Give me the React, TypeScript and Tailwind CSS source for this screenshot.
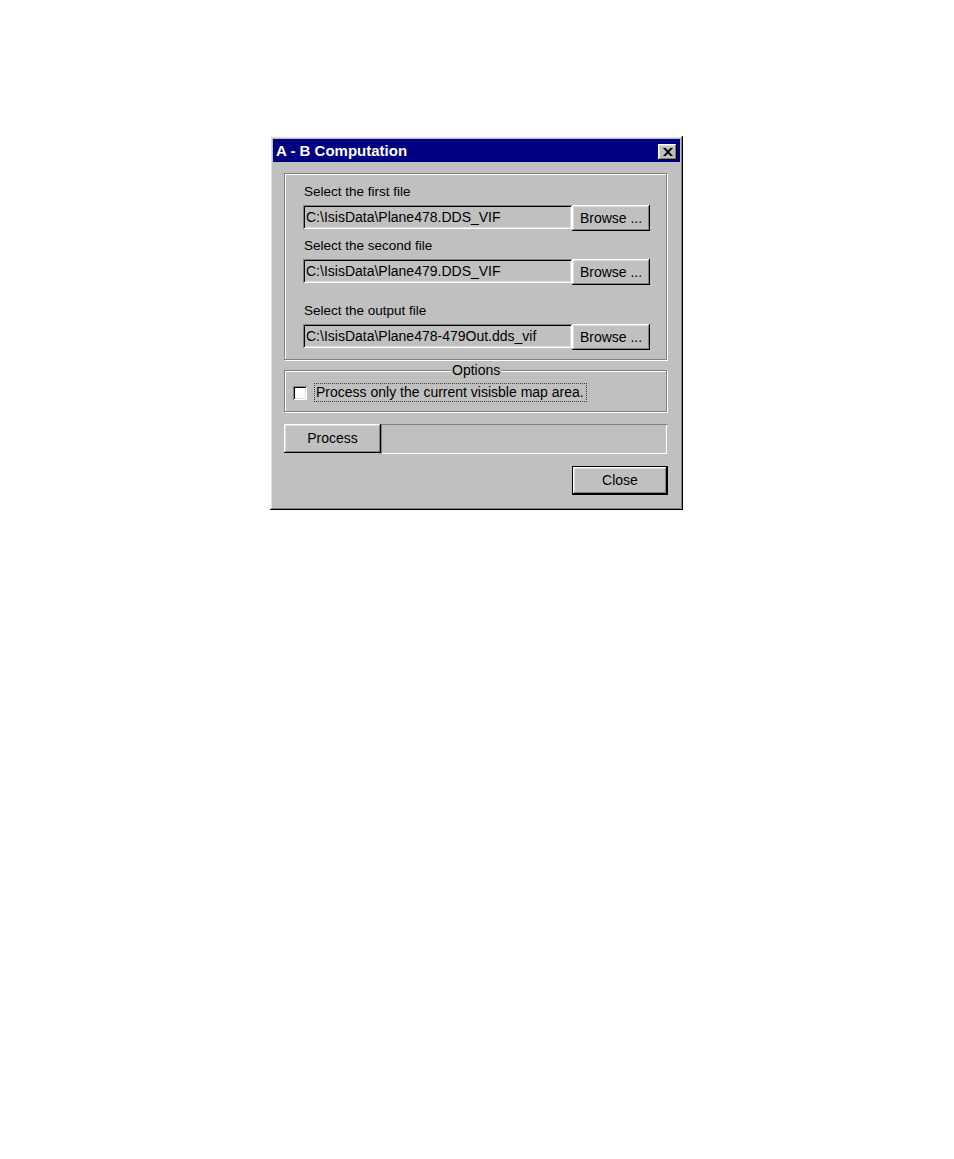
const raised =
  "shadow-[inset_-1px_-1px_#000000,inset_1px_1px_#ffffff,inset_-2px_-2px_#808080,inset_2px_2px_#dfdfdf]";
const sunken =
  "shadow-[inset_1px_1px_#808080,inset_-1px_-1px_#ffffff,inset_2px_2px_#000000,inset_-2px_-2px_#dfdfdf]";
const etched = "border border-[#808080] shadow-[inset_1px_1px_#ffffff,1px_1px_#ffffff]";

const FileRow = ({ label, value, labelTop }: { label: string; value: string; labelTop: string }) => (
  <>
    <div className={`${labelTop} pl-[1px] h-[16px] leading-[16px] text-[13.5px]`}>{label}</div>
    <div className="mt-[5px] flex items-start">
      <div className={`w-[269px] h-[24px] ${sunken} bg-[#c0c0c0] pl-[3px] flex items-center whitespace-nowrap overflow-hidden`}>
        {value}
      </div>
      <button className={`w-[78px] h-[26px] ${raised} bg-[#c0c0c0] flex items-center justify-center`}>
        Browse ...
      </button>
    </div>
  </>
);

export default function App() {
  return (
    <div className="min-h-[1159px] w-full bg-white pt-[136px] pl-[270px] font-['Liberation_Sans',Arial,sans-serif] text-[14px] text-black">
      <div className={`w-[413px] h-[374px] p-[3px] bg-[#c0c0c0] ${raised}`}>
        {/* title bar */}
        <div className="h-[23px] bg-[#000080] flex items-center justify-between pl-[3px] pr-[3px]">
          <span className="text-white font-bold text-[15px] leading-none">A - B Computation</span>
          <button className={`mt-[2px] w-[19px] h-[16px] bg-[#c0c0c0] ${raised} flex items-center justify-center`}>
            <svg width="10" height="8" viewBox="0 0 10 8">
              <path d="M0 0h2.5l2.5 2.6L7.5 0H10L6.3 4 10 8H7.5L5 5.4 2.5 8H0l3.7-4z" fill="#000" />
            </svg>
          </button>
        </div>

        <div className="pl-[11px]">
          {/* files group */}
          <div className={`mt-[11px] w-[383px] h-[187px] ${etched} pl-[18px] pt-[10px]`}>
            <FileRow label="Select the first file" value="C:\IsisData\Plane478.DDS_VIF" labelTop="" />
            <FileRow label="Select the second file" value="C:\IsisData\Plane479.DDS_VIF" labelTop="mt-[7px]" />
            <FileRow label="Select the output file" value="C:\IsisData\Plane478-479Out.dds_vif" labelTop="mt-[18px]" />
          </div>

          {/* options group */}
          <div className={`relative mt-[10px] w-[383px] h-[42px] ${etched}`}>
            <span className="absolute -top-[9px] left-[166px] bg-[#c0c0c0] px-[1px] leading-[16px]">Options</span>
            <div className="flex items-center pl-[8px] pt-[12px]">
              <div className={`w-[14px] h-[14px] bg-white ${sunken}`} />
              <span className="ml-[7px] h-[19px] px-[1px] leading-[17px] border border-dotted border-[#404040] pr-[2px]">
                Process only the current visisble map area.
              </span>
            </div>
          </div>

          {/* process row */}
          <div className="mt-[12px] flex w-[383px]">
            <button className={`w-[97px] h-[29px] ${raised} bg-[#c0c0c0] flex items-center justify-center`}>
              Process
            </button>
            <div className="flex-1 h-[30px] shadow-[inset_1px_1px_#808080,inset_-1px_-1px_#ffffff]" />
          </div>

          {/* close */}
          <div className="mt-[12px] w-[384px] flex justify-end">
            <button className="w-[96px] h-[29px] border border-black bg-[#c0c0c0] flex">
              <span className={`flex-1 ${raised} flex items-center justify-center`}>Close</span>
            </button>
          </div>
        </div>
      </div>
    </div>
  );
}
